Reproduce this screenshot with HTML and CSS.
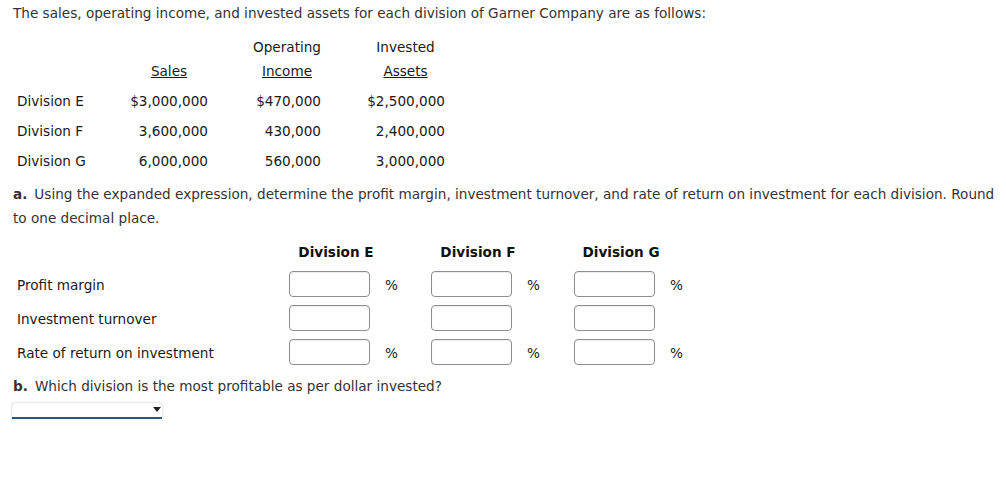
FILE: index.html
```html
<!DOCTYPE html>
<html>
<head>
<meta charset="utf-8">
<link rel="stylesheet" href="styles.css">
</head>
<body>
<div class="page">
  <p class="intro">The sales, operating income, and invested assets for each division of Garner Company are as follows:</p>

  <div class="data">
    <div class="hd1"></div><div class="hd1"></div><div class="hd1 c">Operating</div><div class="hd1 c">Invested</div>
    <div class="hd2"></div><div class="hd2 c"><u>Sales</u></div><div class="hd2 c"><u>Income</u></div><div class="hd2 c"><u>Assets</u></div>
    <div class="row">Division E</div><div class="row r">$3,000,000</div><div class="row r">$470,000</div><div class="row r">$2,500,000</div>
    <div class="row">Division F</div><div class="row r">3,600,000</div><div class="row r">430,000</div><div class="row r">2,400,000</div>
    <div class="row">Division G</div><div class="row r">6,000,000</div><div class="row r">560,000</div><div class="row r">3,000,000</div>
  </div>

  <p class="q"><b class="tag">a.</b>Using the expanded expression, determine the profit margin, investment turnover, and rate of return on investment for each division. Round to one decimal place.</p>

  <div class="answers">
    <div class="ahead"></div>
    <div class="ahead"><span class="dh">Division E</span></div>
    <div class="ahead"><span class="dh">Division F</span></div>
    <div class="ahead"><span class="dh">Division G</span></div>

    <div class="arow label">Profit margin</div>
    <div class="arow cell"><input class="box" type="text"><span class="pct">%</span></div>
    <div class="arow cell"><input class="box" type="text"><span class="pct">%</span></div>
    <div class="arow cell"><input class="box" type="text"><span class="pct">%</span></div>

    <div class="arow label">Investment turnover</div>
    <div class="arow cell"><input class="box" type="text"></div>
    <div class="arow cell"><input class="box" type="text"></div>
    <div class="arow cell"><input class="box" type="text"></div>

    <div class="arow label">Rate of return on investment</div>
    <div class="arow cell"><input class="box" type="text"><span class="pct">%</span></div>
    <div class="arow cell"><input class="box" type="text"><span class="pct">%</span></div>
    <div class="arow cell"><input class="box" type="text"><span class="pct">%</span></div>
  </div>

  <p class="q qb"><b class="tag">b.</b>Which division is the most profitable as per dollar invested?</p>

  <div class="select"><span class="arrow"></span></div>
</div>
</body>
</html>
```

FILE: styles.css
```css
html, body {
  margin: 0;
  padding: 0;
  background: #fff;
}

.page {
  padding: 1px 8px 0 13px;
  font-family: "DejaVu Sans", Verdana, sans-serif;
  font-size: 13.6px;
  color: #333;
  line-height: 24px;
}

p {
  margin: 0;
}

.tag {
  margin-right: 7px;
}

.data {
  display: grid;
  grid-template-columns: 68px 78px 68px 79px;
  column-gap: 45px;
  margin: 10px 0 0 4px;
  color: #1a1a1a;
}

.hd1, .hd2 {
  height: 24px;
  line-height: 24px;
  white-space: nowrap;
}

.hd2 {
  margin-bottom: 3px;
}

.c { text-align: center; }
.r { text-align: right; }

.row {
  height: 30px;
  line-height: 30px;
  white-space: nowrap;
}

.q {
  margin-top: 6px;
}

.answers {
  display: grid;
  grid-template-columns: 272px 142px 143px 142px;
  margin: 10px 0 0 4px;
  color: #1a1a1a;
}

.ahead {
  height: 24px;
  line-height: 24px;
  margin-bottom: 3px;
}

.dh {
  display: inline-block;
  width: 94px;
  text-align: center;
  font-weight: bold;
  color: #111;
  white-space: nowrap;
}

.arow {
  height: 34px;
  display: flex;
  align-items: center;
}

.label {
  white-space: nowrap;
  padding-top: 1px;
  box-sizing: border-box;
}

.box {
  box-sizing: border-box;
  width: 81px;
  height: 26px;
  margin: 0;
  padding: 0 4px;
  border: 1px solid #8e8e8e;
  border-radius: 4px;
  background: #fff;
  box-shadow: inset 0 1px 1px rgba(0, 0, 0, 0.08);
}

.pct {
  margin-left: 15px;
  padding-top: 2px;
}

.qb {
  margin-top: 5px;
}

.select {
  position: relative;
  box-sizing: border-box;
  width: 150px;
  height: 16px;
  margin: 5px 0 0 -1px;
  background: #fff;
  border-radius: 4px 4px 0 0;
  box-shadow: 0 0 2px rgba(0, 0, 0, 0.35);
  border-bottom: 2px solid #1f5a89;
}

.arrow {
  position: absolute;
  right: 1px;
  top: 4px;
  width: 0;
  height: 0;
  border-left: 4px solid transparent;
  border-right: 4px solid transparent;
  border-top: 5px solid #222;
}
```
